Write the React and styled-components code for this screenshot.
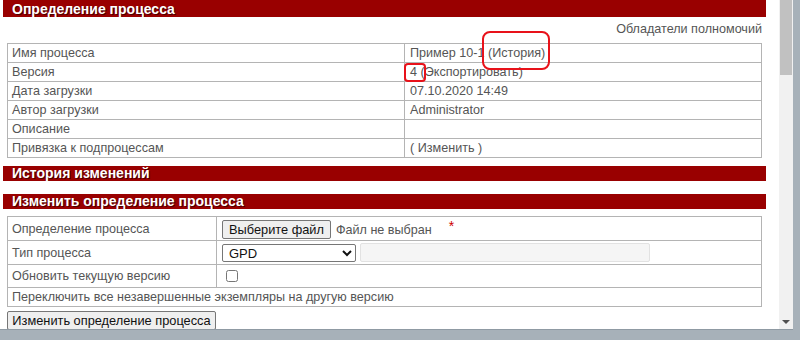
import React from "react";
import styled, { createGlobalStyle } from "styled-components";

const GlobalStyle = createGlobalStyle`
  html, body {
    margin: 0;
    padding: 0;
    background: #a7b1b9;
  }
  body {
    font-family: "Liberation Sans", Arial, sans-serif;
  }
`;

const App = () => {
  return (
    <Frame>
      <GlobalStyle />
      <Viewport>
        <Content>
          <Header $pad={2}>Определение процесса</Header>
          <Authority>Обладатели полномочий</Authority>
          <InfoTable>
            <tbody>
              <tr>
                <Label $w={388}>Имя процесса</Label>
                <Value>Пример 10-1 (История)</Value>
              </tr>
              <tr>
                <Label>Версия</Label>
                <Value>4 (Экспортировать)</Value>
              </tr>
              <tr>
                <Label>Дата загрузки</Label>
                <Value>07.10.2020 14:49</Value>
              </tr>
              <tr>
                <Label>Автор загрузки</Label>
                <Value>Administrator</Value>
              </tr>
              <tr>
                <Label>Описание</Label>
                <Value></Value>
              </tr>
              <tr>
                <Label>Привязка к подпроцессам</Label>
                <Value>( Изменить )</Value>
              </tr>
            </tbody>
          </InfoTable>
          <Header $gap={8}>История изменений</Header>
          <Header $gap={13}>Изменить определение процесса</Header>
          <FormTable>
            <tbody>
              <tr>
                <FormLabel $h={23} $w={200}>Определение процесса</FormLabel>
                <FormCell $h={23}>
                  <FileButton type="button">Выберите файл</FileButton>
                  <FileNote>Файл не выбран</FileNote>
                  <Required>*</Required>
                </FormCell>
              </tr>
              <tr>
                <FormLabel $h={23}>Тип процесса</FormLabel>
                <FormCell $h={23}>
                  <TypeSelect defaultValue="GPD">
                    <option value="GPD">GPD</option>
                  </TypeSelect>
                  <DisabledInput disabled />
                </FormCell>
              </tr>
              <tr>
                <FormLabel $h={22}>Обновить текущую версию</FormLabel>
                <FormCell $h={22}>
                  <Check type="checkbox" />
                </FormCell>
              </tr>
              <tr>
                <FormLabel $h={18} colSpan={2}>
                  Переключить все незавершенные экземпляры на другую версию
                </FormLabel>
              </tr>
            </tbody>
          </FormTable>
          <SubmitButton type="button">Изменить определение процесса</SubmitButton>
          <Mark $x={482} $y={31} $w={68} $h={39} $r={8} />
          <Mark $x={404} $y={63} $w={22} $h={19} $r={4} />
        </Content>
        <Scrollbar>
          <Thumb />
          <ArrowDown />
        </Scrollbar>
      </Viewport>
    </Frame>
  );
};

const Frame = styled.div`
  width: 800px;
  height: 340px;
  box-sizing: border-box;
  padding: 0 7px 10px 0;
  background: #a7b1b9;
`;

const Viewport = styled.div`
  display: flex;
  height: 330px;
  background: #fff;
  border-bottom: 1px solid #8f9aa3;
  box-sizing: border-box;
  overflow: hidden;
`;

const Content = styled.div`
  position: relative;
  flex: 1;
  padding: 0 13px 0 3px;
  color: #555;
  font-size: 12.6px;
`;

const Header = styled.div`
  margin-top: ${(p) => p.$gap || 0}px;
  padding: ${(p) => p.$pad || 0}px 0 0 9px;
  height: 15px;
  line-height: 15px;
  background: #990000;
  color: #fff;
  font-weight: bold;
  font-size: 14px;
  text-shadow: 1px 1px 0 #4a0000;
  white-space: nowrap;
  overflow: hidden;
`;

const Authority = styled.div`
  margin-top: 5px;
  padding-right: 4px;
  height: 15px;
  line-height: 15px;
  text-align: right;
`;

const InfoTable = styled.table`
  margin: 6px 4px 0 4px;
  width: 755px;
  border-collapse: collapse;
  font-size: 12.6px;
  color: #555;
`;

const Label = styled.td`
  width: ${(p) => (p.$w ? `${p.$w}px` : "auto")};
  border: 1px solid #b4b4b4;
  padding: 0 4px;
  height: 18px;
  line-height: 18px;
`;

const Value = styled.td`
  border: 1px solid #b4b4b4;
  padding: 0 5px;
  height: 18px;
  line-height: 18px;
`;

const FormTable = styled.table`
  margin: 7px 4px 0 4px;
  width: 755px;
  border-collapse: collapse;
  font-size: 12.6px;
  color: #555;
`;

const FormLabel = styled.td`
  width: ${(p) => (p.$w ? `${p.$w}px` : "auto")};
  height: ${(p) => p.$h}px;
  border: 1px solid #b4b4b4;
  padding: 0 4px;
  vertical-align: middle;
  white-space: nowrap;
`;

const FormCell = styled.td`
  height: ${(p) => p.$h}px;
  border: 1px solid #b4b4b4;
  padding: 0 5px;
  vertical-align: middle;
  white-space: nowrap;
`;

const ButtonBase = styled.button`
  font-family: "Liberation Sans", Arial, sans-serif;
  font-size: 12.8px;
  color: #111;
  background: #efefef;
  border: 1px solid #767676;
  border-radius: 2px;
  padding: 0 6px;
  height: 19px;
  line-height: 17px;
  margin: 0;
`;

const FileButton = styled(ButtonBase)`
  vertical-align: middle;
`;

const FileNote = styled.span`
  margin-left: 5px;
  vertical-align: middle;
`;

const Required = styled.span`
  margin-left: 17px;
  color: #cc0000;
  font-size: 14px;
  vertical-align: 2px;
`;

const TypeSelect = styled.select`
  width: 134px;
  height: 18px;
  font-family: "Liberation Sans", Arial, sans-serif;
  font-size: 13px;
  color: #111;
  border: 1px solid #767676;
  border-radius: 2px;
  background: #fff;
  padding: 0 2px;
  margin: 0;
  vertical-align: middle;
`;

const DisabledInput = styled.input`
  width: 290px;
  height: 19px;
  box-sizing: border-box;
  margin: 0 0 0 4px;
  border: 1px solid #e2e2e2;
  border-radius: 2px;
  background: #f5f5f5;
  vertical-align: middle;
`;

const Check = styled.input`
  width: 12px;
  height: 12px;
  margin: 3px 3px 3px 4px;
  vertical-align: middle;
`;

const SubmitButton = styled(ButtonBase)`
  display: block;
  margin: 4px 0 0 4px;
  height: 19px;
  width: 209px;
  padding: 0;
`;

const Mark = styled.div`
  position: absolute;
  left: ${(p) => p.$x}px;
  top: ${(p) => p.$y}px;
  width: ${(p) => p.$w}px;
  height: ${(p) => p.$h}px;
  box-sizing: border-box;
  border: 2px solid #e8121a;
  border-radius: ${(p) => p.$r}px;
  pointer-events: none;
`;

const Scrollbar = styled.div`
  width: 14px;
  display: flex;
  flex-direction: column;
  justify-content: space-between;
  align-items: center;
  background: #f1f1f1;
  padding-bottom: 5px;
  box-sizing: border-box;
`;

const Thumb = styled.div`
  width: 12px;
  height: 75px;
  background: #c1c1c1;
  margin-right: 1px;
`;

const ArrowDown = styled.div`
  width: 0;
  height: 0;
  border-left: 4px solid transparent;
  border-right: 4px solid transparent;
  border-top: 4px solid #505050;
`;

export default App;
